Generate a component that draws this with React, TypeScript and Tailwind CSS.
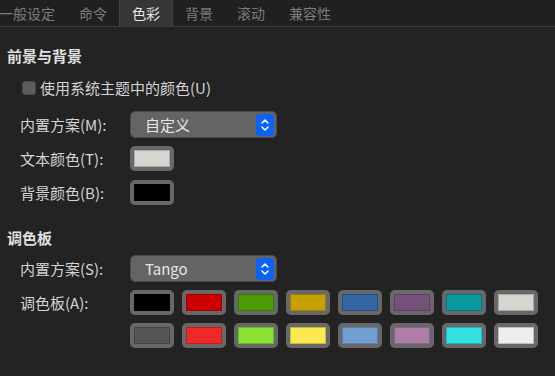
import React from 'react';

const tabs = ['一般设定', '命令', '色彩', '背景', '滚动', '兼容性'];

const row1 = ['#000000', '#cc0000', '#4e9a06', '#c4a000', '#3465a4', '#75507b', '#06989a', '#d3d7cf'];
const row2 = ['#555753', '#ef2929', '#8ae234', '#fce94f', '#729fcf', '#ad7fa8', '#34e2e2', '#eeeeec'];

const Swatch: React.FC<{ color: string }> = ({ color }) => (
  <div className="w-[44px] h-[25px] rounded-[5px] bg-[#686868] p-[4px] shrink-0">
    <div className="w-full h-full border border-black/20" style={{ backgroundColor: color }} />
  </div>
);

const Combo: React.FC<{ value: string }> = ({ value }) => (
  <div className="w-[147px] h-[27px] rounded-[5px] bg-[#646464] border border-[#4a4a4a] flex items-center justify-between pl-[14px] pr-[2px]">
    <span className="text-[15px] leading-[20px] text-[#e6e6e6]">{value}</span>
    <div className="w-[18px] h-[22px] rounded-[4px] bg-[#0a63f6] flex items-center justify-center">
      <svg width="10" height="16" viewBox="0 0 10 16" fill="none" stroke="white" strokeWidth="1.5" strokeLinecap="round" strokeLinejoin="round">
        <path d="M2 6 L5 3 L8 6" />
        <path d="M2 10 L5 13 L8 10" />
      </svg>
    </div>
  </div>
);

const App: React.FC = () => {
  return (
    <div className="w-[555px] h-[376px] bg-[#232323] text-[#d4d4d4] overflow-hidden" style={{ fontFamily: '"Noto Sans CJK SC", "Noto Sans", sans-serif' }}>
      {/* tab bar */}
      <div className="h-[27px] bg-[#202020] border-b border-[#3c3c3c] flex items-stretch -ml-[13px]">
        {tabs.map((t) => (
          <div
            key={t}
            className={
              t === '色彩'
                ? 'px-[12px] flex items-center text-[14px] text-[#e8e8e8] bg-[#363636] border-x border-[#3f3f3f]'
                : 'px-[12px] flex items-center text-[14px] text-[#7c7c7c]'
            }
          >
            {t}
          </div>
        ))}
      </div>

      <div className="pl-[7px] pt-[19px]">
        <div className="text-[15px] font-bold text-[#e0e0e0] leading-[20px]">前景与背景</div>

        <div className="flex items-center gap-[4px] mt-[13px] pl-[15px] h-[18px]">
          <div className="w-[14px] h-[14px] rounded-[3px] bg-[#5c5c5c] border border-[#4a4a4a]" />
          <span className="text-[15px] leading-[18px]">使用系统主题中的颜色(U)</span>
        </div>

        <div className="flex items-center mt-[14px] pl-[13px]">
          <span className="w-[110px] text-[15px] leading-[20px]">内置方案(M):</span>
          <Combo value="自定义" />
        </div>

        <div className="flex items-center mt-[8px] pl-[13px]">
          <span className="w-[110px] text-[15px] leading-[20px]">文本颜色(T):</span>
          <Swatch color="#d3d7cf" />
        </div>

        <div className="flex items-center mt-[9px] pl-[13px]">
          <span className="w-[110px] text-[15px] leading-[20px]">背景颜色(B):</span>
          <Swatch color="#000000" />
        </div>

        <div className="text-[15px] font-bold text-[#e0e0e0] leading-[20px] mt-[23px]">调色板</div>

        <div className="flex items-center mt-[7px] pl-[13px]">
          <span className="w-[110px] text-[15px] leading-[20px]">内置方案(S):</span>
          <Combo value="Tango" />
        </div>

        <div className="flex items-start mt-[8px] pl-[13px]">
          <span className="w-[110px] text-[15px] leading-[25px]">调色板(A):</span>
          <div className="flex flex-col gap-[8px]">
            <div className="flex gap-[8px]">
              {row1.map((c) => (
                <Swatch key={c} color={c} />
              ))}
            </div>
            <div className="flex gap-[8px]">
              {row2.map((c) => (
                <Swatch key={c} color={c} />
              ))}
            </div>
          </div>
        </div>
      </div>
    </div>
  );
};

export default App;
